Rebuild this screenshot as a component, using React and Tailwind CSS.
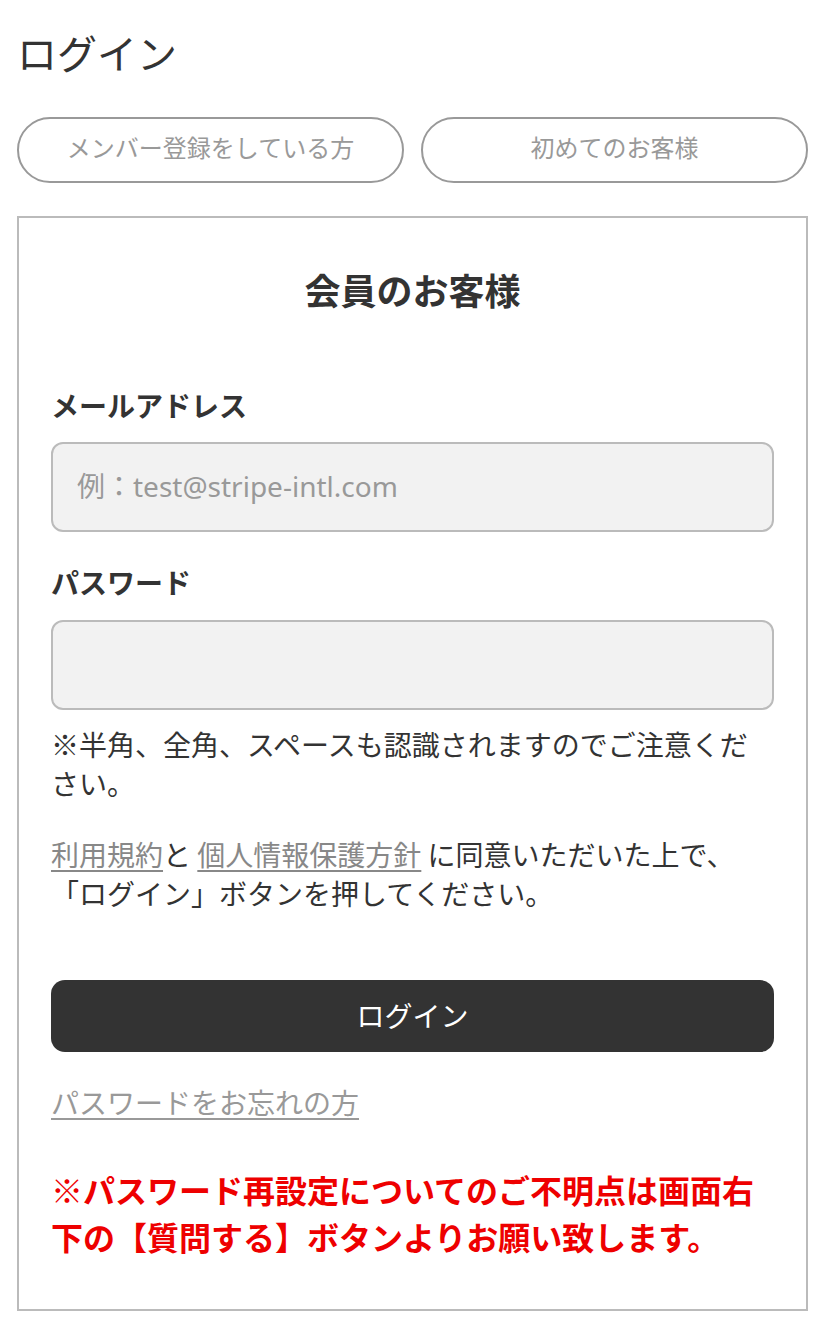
import React from "react";

export default function App() {
  return (
    <div
      className="min-h-[1342px] bg-white px-[17px] pt-[22px] text-[#333]"
      style={{ fontFamily: '"Noto Sans CJK JP", "Noto Sans", sans-serif' }}
    >
      <h1 className="text-[40px] leading-[60px] font-normal">ログイン</h1>

      <div className="mt-[35px] grid grid-cols-2 gap-[17px]">
        <button className="h-[66px] rounded-full border-2 border-[#999] bg-white pb-[6px] text-[24px] text-[#999]">
          メンバー登録をしている方
        </button>
        <button className="h-[66px] rounded-full border-2 border-[#999] bg-white pb-[6px] text-[24px] text-[#999]">
          初めてのお客様
        </button>
      </div>

      <div className="mt-[33px] border-2 border-[#bbb] px-[32px] pt-[44px] pb-[49px]">
        <h2 className="text-center text-[36px] leading-[54px] font-bold">会員のお客様</h2>

        <label className="mt-[68px] block text-[28px] leading-[42px] font-bold">メールアドレス</label>
        <input
          type="text"
          placeholder="例：test@stripe-intl.com"
          style={{ fontFamily: '"Noto Sans", "Noto Sans CJK JP", sans-serif' }}
          className="mt-[16px] block h-[90px] w-full rounded-[12px] border-2 border-[#bbb] bg-[#f2f2f2] px-[24px] pb-[3px] text-[28px] text-[#333] outline-none placeholder:text-[#999]"
        />

        <label className="mt-[29px] block text-[28px] leading-[42px] font-bold">パスワード</label>
        <input
          type="password"
          className="mt-[17px] block h-[90px] w-full rounded-[12px] border-2 border-[#bbb] bg-[#f2f2f2] px-[24px] text-[28px] text-[#333] outline-none"
        />

        <p className="mt-[15px] text-[28px] leading-[39px]">
          ※半角、全角、スペースも認識されますのでご注意ください。
        </p>

        <p className="mt-[32px] text-[28px] leading-[39px]">
          <a href="#" className="text-[#888] underline decoration-[#888] underline-offset-[4px]">利用規約</a>
          と{" "}
          <a href="#" className="text-[#888] underline decoration-[#888] underline-offset-[4px]">個人情報保護方針</a>{" "}
          に同意いただいた上で、
          <br />
          「ログイン」ボタンを押してください。
        </p>

        <button className="mt-[67px] block h-[72px] w-full rounded-[14px] bg-[#333] pb-[3px] text-[28px] text-white">
          ログイン
        </button>

        <a
          href="#"
          className="mt-[31px] inline-block text-[28px] leading-[39px] text-[#999] underline decoration-[#999] underline-offset-[4px]"
        >
          パスワードをお忘れの方
        </a>

        <p className="mt-[44px] text-[32px] leading-[47px] font-bold text-[#ee0000]">
          ※パスワード再設定についてのご不明点は画面右下の【質問する】ボタンよりお願い致します。
        </p>
      </div>
    </div>
  );
}
